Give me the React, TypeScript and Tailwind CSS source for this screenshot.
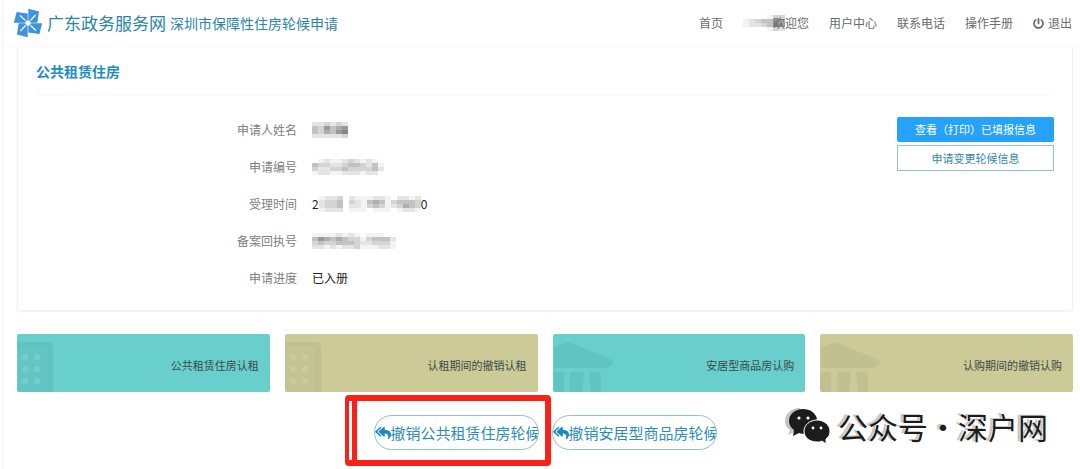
import { FaPowerOff, FaReplyAll } from 'react-icons/fa'

const BLOCK = 6

// Each string is a row of blocks, 0 = empty, 9 = darkest
const masks = {
  user: ['0000133', '1234465', '1223476', '0000132'],
  name: ['223232', '436456', '435467', '222223'],
  number: ['012112321210', '433223443241', '322334333342', '122112221220'],
  time: ['12230211122102212', '23340321454134443', '23340221343123543', '12220111011101221'],
  receipt: ['11112121011100', '46545433134442', '34334443223331', '22121223111221'],
}

const greys = ['transparent', '#f3f3f3', '#e4e4e4', '#d4d4d4', '#c2c2c2', '#adadad', '#999999', '#858585', '#6c6c6c', '#555555']

const fields = [
  { label: '申请人姓名', mask: masks.name },
  { label: '申请编号', mask: masks.number },
  { label: '受理时间', before: '2', mask: masks.time, after: '0' },
  { label: '备案回执号', mask: masks.receipt },
  { label: '申请进度', after: '已入册' },
]

const tiles = [
  { label: '公共租赁住房认租', color: 'bg-[#68cfcc]', icon: 'building' },
  { label: '认租期间的撤销认租', color: 'bg-[#cccb98]', icon: 'building' },
  { label: '安居型商品房认购', color: 'bg-[#68cfcc]', icon: 'bank' },
  { label: '认购期间的撤销认购', color: 'bg-[#cccb98]', icon: 'bank' },
]

function Mask({ rows }: { rows: string[] }) {
  const width = rows[0].length * BLOCK
  return (
    <svg width={width} height={16} viewBox={`0 0 ${width} 16`} shapeRendering="crispEdges" aria-hidden="true">
      {rows.map((row, y) =>
        row.split('').map((level, x) => (
          <rect key={`${x}-${y}`} x={x * BLOCK} y={y * 4} width={BLOCK} height={4} fill={greys[Number(level)]} />
        ))
      )}
    </svg>
  )
}

function Logo() {
  return (
    <svg width="28" height="30" viewBox="0 0 28 30" aria-hidden="true">
      {[0, 90, 180, 270].map((angle) => (
        <g key={angle} transform={`rotate(${angle} 14 15)`}>
          <path d="M14.3 14.7 V0.8 L25 3.6 L23.4 14.7 Z" fill="#3f93dc" />
          <path d="M16.5 12.5 L21.5 7" stroke="#fff" strokeWidth="1.2" />
        </g>
      ))}
      <circle cx="14" cy="15" r="2.6" fill="#fff" />
    </svg>
  )
}

function BuildingIcon() {
  return (
    <svg className="absolute bottom-0 left-0" width="36" height="50" viewBox="0 0 36 50" aria-hidden="true">
      <path d="M0 0 H32 Q36 0 36 4 V50 H0 Z" fill="#000" fillOpacity="0.04" />
      <path d="M30 5 H36 V50 H30 Z M0 0 H32 L36 4 H0 Z" fill="#000" fillOpacity="0.02" />
      <g fill="#fff" fillOpacity="0.13">
        <rect x="5" y="12" width="6" height="6" rx="2" />
        <rect x="17" y="12" width="6" height="6" rx="2" />
        <rect x="5" y="24" width="6" height="6" rx="2" />
        <rect x="17" y="24" width="6" height="6" rx="2" />
        <rect x="5" y="36" width="6" height="6" rx="2" />
        <rect x="17" y="36" width="6" height="6" rx="2" />
      </g>
    </svg>
  )
}

function BankIcon() {
  return (
    <svg className="absolute bottom-0 left-0" width="62" height="50" viewBox="0 0 62 50" aria-hidden="true">
      <g fill="#000" fillOpacity="0.05">
        <path d="M0 6 L12 1 Q15 0 18 1 L57 17 Q61 19 60 22 L54 26 H0 Z" />
        <path d="M0 30 H11 V50 H0 Z" />
        <path d="M17 33 Q17 30 20 30 H28 Q31 30 31 33 L29 50 H17 Z" />
        <path d="M36 33 Q36 30 39 30 H45 Q48 30 48 33 V50 H38 Z" />
      </g>
    </svg>
  )
}

function WechatIcon() {
  return (
    <svg width="46" height="38" viewBox="0 0 46 38" aria-hidden="true">
      <path d="M15 1 C6 1 0 7 0 14 C0 18 2 21 5 23 L3 28 L9 25 H15 Z" fill="#c4c4c4" />
      <path d="M18 2 C10 2 4 7 4 14 C4 18 6 21 9 23 L8 29 L14 26 C16 27 19 27 21 26 L32 12 C31 6 25 2 18 2 Z" fill="#1c1c1c" />
      <path
        d="M32 13 C25 13 19 18 19 24 C19 31 25 35 32 35 C34 35 36 35 37 34 L41 37 L41 32 C44 30 45 27 45 24 C45 18 39 13 32 13 Z"
        fill="#1c1c1c"
        stroke="#fff"
        strokeWidth="1"
      />
      <g fill="#fff">
        <circle cx="14" cy="11" r="1.6" />
        <circle cx="23" cy="11" r="1.6" />
        <circle cx="28" cy="21" r="1.4" />
        <circle cx="36" cy="21" r="1.4" />
      </g>
    </svg>
  )
}

function CancelButton({ label }: { label: string }) {
  return (
    <button
      type="button"
      className="flex h-[35px] w-[165px] items-center overflow-hidden rounded-full border border-[#8fc4c6] bg-white text-[15px] whitespace-nowrap text-[#2e8db8]"
    >
      <FaReplyAll className="size-4 shrink-0 text-[#1a8ac4]" />
      {label}
    </button>
  )
}

export default function App() {
  return (
    <div className="ml-[2px] border-l border-[#f5f5f5] bg-white font-['Noto_Sans_CJK_SC',sans-serif] text-xs text-[#6b6b6b]">
      {/* Header */}
      <header className="flex h-[47px] items-center justify-between border-b border-[#f9f9f9] pr-2 pl-[11px]">
        <div className="flex items-center gap-1 text-[#2b86a6]">
          <Logo />
          <span className="pl-px text-[17px]">广东政务服务网</span>
          <span className="text-sm">深圳市保障性住房轮候申请</span>
        </div>
        <nav className="flex items-center gap-5">
          <a href="#home">首页</a>
          <a href="#welcome" className="flex items-center">
            <span className="-mr-3">
              <Mask rows={masks.user} />
            </span>
            欢迎您
          </a>
          <a href="#user">用户中心</a>
          <a href="#contact">联系电话</a>
          <a href="#manual">操作手册</a>
          <a href="#logout" className="flex items-center gap-1">
            <FaPowerOff className="size-[11px]" />
            退出
          </a>
        </nav>
      </header>

      <main className="pr-[7px] pl-[14px]">
        {/* Application info */}
        <section className="rounded-b-sm border border-t-0 border-[#f0f0f0] pb-[14px] shadow-xs">
          <h1 className="px-[18px] pt-3 pb-3 text-sm leading-6 font-bold text-[#1f8dbd]">公共租赁住房</h1>
          <div className="mx-[18px] border-t border-[#fafafa]" />
          <div className="flex items-start justify-between pt-[15px] pr-[18px]">
            <dl className="grid grid-cols-[279px_auto] gap-x-[15px]">
              {fields.map((field) => (
                <div key={field.label} className="col-span-2 grid h-[37px] grid-cols-subgrid items-center">
                  <dt className="text-right text-[#808080]">{field.label}</dt>
                  <dd className="flex items-center text-[#222]">
                    {field.before}
                    {field.mask && <Mask rows={field.mask} />}
                    {field.after}
                  </dd>
                </div>
              ))}
            </dl>
            <div className="mt-[6px] flex w-[157px] flex-col gap-[3px] text-[11px]">
              <button type="button" className="h-[25px] rounded-xs bg-[#27a2fb] text-white">
                查看（打印）已填报信息
              </button>
              <button type="button" className="h-[26px] border border-[#8fc4cb] bg-white text-[#3389a8]">
                申请变更轮候信息
              </button>
            </div>
          </div>
        </section>

        {/* Entry tiles */}
        <div className="mt-[23px] grid grid-cols-4 gap-[15px]">
          {tiles.map((tile) => (
            <a
              key={tile.label}
              href="#apply"
              className={`relative flex h-[58px] items-center justify-end overflow-hidden rounded-xs pt-1 pr-[11px] text-[11px] text-[#3c4a48] ${tile.color}`}
            >
              {tile.icon === 'building' ? <BuildingIcon /> : <BankIcon />}
              {tile.label}
            </a>
          ))}
        </div>

        {/* Cancel actions */}
        <div className="relative flex justify-center gap-[13px] pt-[23px] pb-[19px]">
          <div className="relative">
            <CancelButton label="撤销公共租赁住房轮候" />
            <div className="pointer-events-none absolute -top-5 -right-3 -bottom-4 -left-[29px] rounded-sm border-[6px] border-l-4 border-[#fb2118] pl-[3px]">
              <div className="h-full border-l-[5px] border-[#fb2118]" />
            </div>
          </div>
          <CancelButton label="撤销安居型商品房轮候" />
          <div className="absolute top-[14px] right-[25px] flex items-center gap-[7px] text-[#1c1c1c]">
            <WechatIcon />
            <span className="text-[30px] leading-10 whitespace-nowrap [text-shadow:-3px_-1px_0_#c8c8c8]">公众号·深户网</span>
          </div>
        </div>
      </main>
    </div>
  )
}
